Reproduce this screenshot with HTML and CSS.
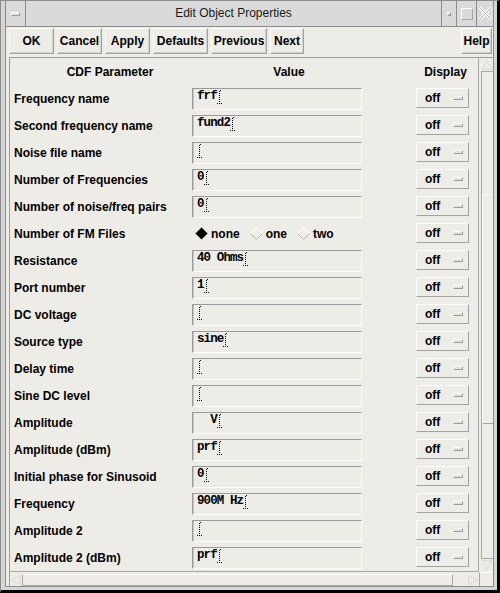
FILE: index.html
```html
<!DOCTYPE html>
<html>
<head>
<meta charset="utf-8">
<title>Edit Object Properties</title>
<link rel="stylesheet" href="styles.css">
</head>
<body>
<div class="wm">
  <div class="frame">
    <div class="titlebar">
      <div class="tb-box tb-menu"><span class="menu-glyph"></span></div>
      <div class="tb-title">Edit Object Properties</div>
      <div class="tb-box tb-min"><span class="min-glyph"></span></div>
      <div class="tb-box tb-max"><span class="max-glyph"></span></div>
      <div class="tb-box tb-close">
        <svg width="13" height="13" viewBox="0 0 13 13"><path d="M0.5 0.5 L12.5 12.5 M12.5 0.5 L0.5 12.5" stroke="#ffffff" stroke-width="3" fill="none"/><path d="M0.5 0.5 L12.5 12.5 M12.5 0.5 L0.5 12.5" stroke="#b4b4b4" stroke-width="1" fill="none"/></svg>
      </div>
    </div>
    <div class="client">
      <div class="toolbar">
        <button class="btn b-ok">OK</button>
        <button class="btn b-cancel">Cancel</button>
        <button class="btn b-apply">Apply</button>
        <button class="btn b-defaults">Defaults</button>
        <button class="btn b-previous">Previous</button>
        <button class="btn b-next">Next</button>
        <button class="btn b-help">Help</button>
      </div>
      <div class="scrollwin">
        <div class="view">
          <div class="form">
            <div class="hdr hdr-param">CDF Parameter</div>
            <div class="hdr hdr-value">Value</div>
            <div class="hdr hdr-display">Display</div>

            <div class="lbl">Frequency name</div>
            <div class="field"><span class="txt">frf</span><span class="caret"></span></div>
            <div class="disp"><span>off</span><span class="ind"></span></div>

            <div class="lbl">Second frequency name</div>
            <div class="field"><span class="txt">fund2</span><span class="caret"></span></div>
            <div class="disp"><span>off</span><span class="ind"></span></div>

            <div class="lbl">Noise file name</div>
            <div class="field"><span class="txt"></span><span class="caret"></span></div>
            <div class="disp"><span>off</span><span class="ind"></span></div>

            <div class="lbl">Number of Frequencies</div>
            <div class="field"><span class="txt">0</span><span class="caret"></span></div>
            <div class="disp"><span>off</span><span class="ind"></span></div>

            <div class="lbl">Number of noise/freq pairs</div>
            <div class="field"><span class="txt">0</span><span class="caret"></span></div>
            <div class="disp"><span>off</span><span class="ind"></span></div>

            <div class="lbl">Number of FM Files</div>
            <div class="radios">
              <span class="radio"><svg width="13" height="13" viewBox="0 0 13 13"><polygon points="6.5,0.5 12.5,6.5 6.5,12.5 0.5,6.5" fill="#000"/><path d="M0.5 6.5 L6.5 0.5 L12.5 6.5" stroke="#6e6e6e" fill="none"/></svg>none</span>
              <span class="radio"><svg width="13" height="13" viewBox="0 0 13 13"><path d="M0.5 6.5 L6.5 0.5 L12.5 6.5" stroke="#ffffff" fill="none"/><path d="M0.5 6.5 L6.5 12.5 L12.5 6.5" stroke="#b4b4b4" fill="none"/></svg>one</span>
              <span class="radio"><svg width="13" height="13" viewBox="0 0 13 13"><path d="M0.5 6.5 L6.5 0.5 L12.5 6.5" stroke="#ffffff" fill="none"/><path d="M0.5 6.5 L6.5 12.5 L12.5 6.5" stroke="#b4b4b4" fill="none"/></svg>two</span>
            </div>
            <div class="disp"><span>off</span><span class="ind"></span></div>

            <div class="lbl">Resistance</div>
            <div class="field"><span class="txt">40 Ohms</span><span class="caret"></span></div>
            <div class="disp"><span>off</span><span class="ind"></span></div>

            <div class="lbl">Port number</div>
            <div class="field"><span class="txt">1</span><span class="caret"></span></div>
            <div class="disp"><span>off</span><span class="ind"></span></div>

            <div class="lbl">DC voltage</div>
            <div class="field"><span class="txt"></span><span class="caret"></span></div>
            <div class="disp"><span>off</span><span class="ind"></span></div>

            <div class="lbl">Source type</div>
            <div class="field"><span class="txt">sine</span><span class="caret"></span></div>
            <div class="disp"><span>off</span><span class="ind"></span></div>

            <div class="lbl">Delay time</div>
            <div class="field"><span class="txt"></span><span class="caret"></span></div>
            <div class="disp"><span>off</span><span class="ind"></span></div>

            <div class="lbl">Sine DC level</div>
            <div class="field"><span class="txt"></span><span class="caret"></span></div>
            <div class="disp"><span>off</span><span class="ind"></span></div>

            <div class="lbl">Amplitude</div>
            <div class="field"><span class="txt">  V</span><span class="caret"></span></div>
            <div class="disp"><span>off</span><span class="ind"></span></div>

            <div class="lbl">Amplitude (dBm)</div>
            <div class="field"><span class="txt">prf</span><span class="caret"></span></div>
            <div class="disp"><span>off</span><span class="ind"></span></div>

            <div class="lbl">Initial phase for Sinusoid</div>
            <div class="field"><span class="txt">0</span><span class="caret"></span></div>
            <div class="disp"><span>off</span><span class="ind"></span></div>

            <div class="lbl">Frequency</div>
            <div class="field"><span class="txt">900M Hz</span><span class="caret"></span></div>
            <div class="disp"><span>off</span><span class="ind"></span></div>

            <div class="lbl">Amplitude 2</div>
            <div class="field"><span class="txt"></span><span class="caret"></span></div>
            <div class="disp"><span>off</span><span class="ind"></span></div>

            <div class="lbl">Amplitude 2 (dBm)</div>
            <div class="field"><span class="txt">prf</span><span class="caret"></span></div>
            <div class="disp"><span>off</span><span class="ind"></span></div>
          </div>
        </div>
        <div class="vscroll">
          <div class="arrow arrow-up"><svg width="10" height="10" viewBox="0 0 10 10"><path d="M5 0.5 L0.5 9.5 M5 0.5 L9.5 9.5 M0.5 9.5 L9.5 9.5" stroke="#c8c8c8" stroke-dasharray="1 1" fill="none"/></svg></div>
          <div class="vtrough">
            <div class="vthumb"></div>
          </div>
          <div class="arrow arrow-down"><svg width="10" height="10" viewBox="0 0 10 10"><path d="M5 9.5 L0.5 0.5 M5 9.5 L9.5 0.5 M0.5 0.5 L9.5 0.5" stroke="#c8c8c8" stroke-dasharray="1 1" fill="none"/></svg></div>
        </div>
        <div class="hscroll">
          <div class="arrow arrow-left"><svg width="10" height="10" viewBox="0 0 10 10"><path d="M0.5 5 L9.5 0.5 M0.5 5 L9.5 9.5 M9.5 0.5 L9.5 9.5" stroke="#c8c8c8" stroke-dasharray="1 1" fill="none"/></svg></div>
          <div class="htrough"><div class="hthumb"></div></div>
          <div class="arrow arrow-right"><svg width="10" height="10" viewBox="0 0 10 10"><path d="M9.5 5 L0.5 0.5 M9.5 5 L0.5 9.5 M0.5 0.5 L0.5 9.5" stroke="#c8c8c8" stroke-dasharray="1 1" fill="none"/></svg></div>
        </div>
        <div class="corner"></div>
      </div>
    </div>
  </div>
</div>
</body>
</html>
```
FILE: styles.css
```css
* { box-sizing: border-box; }
html, body { margin: 0; padding: 0; }
body {
  width: 500px;
  height: 593px;
  overflow: hidden;
  background: #000;
  font-family: "Liberation Sans", Arial, sans-serif;
}

.wm {
  width: 500px;
  height: 593px;
  display: flex;
  background: #d6d6d6;
  border-left: 1px solid #8c8c8c;
  border-top: 1px solid #8c8c8c;
  border-right: 3px solid #000;
  border-bottom: 3px solid #000;
  padding: 0 3px 3px 4px;
}

.frame {
  flex: 1;
  display: flex;
  flex-direction: column;
  border-left: 1px solid #8c8c8c;
  border-right: 1px solid #8c8c8c;
  border-bottom: 1px solid #8c8c8c;
}

/* title bar */
.titlebar {
  height: 26px;
  display: flex;
  background: #dadada;
  border-bottom: 1px solid #8c8c8c;
}
.tb-box {
  display: flex;
  align-items: center;
  justify-content: center;
}
.tb-menu { width: 20px; border-right: 1px solid #8c8c8c; }
.menu-glyph {
  width: 9px;
  height: 4px;
  background: #e4e4e4;
  border-top: 1px solid #fff;
  border-left: 1px solid #fff;
  border-right: 1px solid #9a9a9a;
  border-bottom: 1px solid #9a9a9a;
}
.tb-title {
  flex: 1;
  text-align: center;
  font-size: 12px;
  line-height: 25px;
  color: #1a1a1a;
}
.tb-min { width: 15px; border-left: 1px solid #8c8c8c; }
.min-glyph {
  width: 4px;
  height: 4px;
  border-top: 1px solid #fff;
  border-left: 1px solid #fff;
  border-right: 1px solid #9a9a9a;
  border-bottom: 1px solid #9a9a9a;
}
.tb-max { width: 20px; border-left: 1px solid #8c8c8c; }
.max-glyph {
  width: 12px;
  height: 12px;
  border-top: 1px solid #fff;
  border-left: 1px solid #fff;
  border-right: 1px solid #a6a6a6;
  border-bottom: 1px solid #a6a6a6;
}
.tb-close { width: 17px; border-left: 1px solid #8c8c8c; }

/* client */
.client {
  flex: 1;
  display: flex;
  flex-direction: column;
  background: #edece6;
}

.toolbar {
  display: flex;
  gap: 3px;
  padding: 1px 1px 0 3px;
  height: 27px;
}
.btn {
  height: 26px;
  padding: 0;
  margin: 0;
  font-family: "Liberation Sans", Arial, sans-serif;
  font-weight: bold;
  font-size: 12px;
  color: #000;
  background: #edece6;
  border: 1px solid;
  border-color: #ffffff #a2a2a2 #a2a2a2 #ffffff;
  box-shadow: inset -1px -1px 0 #d2d2cc;
}
.b-ok { width: 45px; }
.b-cancel { width: 45px; }
.b-apply { width: 45px; }
.b-defaults { width: 55px; }
.b-previous { width: 56px; }
.b-next { width: 34px; }
.b-help { width: 31px; margin-left: auto; }

/* scrolled window */
.scrollwin {
  flex: 1;
  margin: 3px 0 0 3px;
  border-top: 1px solid #9c9c9c;
  border-left: 1px solid #9c9c9c;
  display: grid;
  grid-template-columns: 1fr 14px;
  grid-template-rows: 1fr 14px;
  min-height: 0;
}
.view {
  overflow: hidden;
  border-right: 1px solid #a8a8a8;
  border-bottom: 1px solid #a8a8a8;
  min-height: 0;
}
.form {
  display: grid;
  grid-template-columns: 178px 170px 54px 53px;
  grid-auto-rows: 27px;
  padding-left: 4px;
  align-items: center;
}
.hdr {
  font-weight: bold;
  font-size: 12px;
  color: #000;
}
.hdr-param { grid-column: 1; justify-self: center; padding-left: 14px; }
.hdr-value { grid-column: 2 / 4; justify-self: center; padding-right: 30px; }
.hdr-display { grid-column: 4; justify-self: center; padding-left: 6px; }

.lbl {
  grid-column: 1;
  font-weight: bold;
  font-size: 12px;
  color: #000;
  white-space: nowrap;
}
.field {
  grid-column: 2;
  height: 22px;
  border: 1px solid;
  border-color: #9a9a9a #ffffff #ffffff #9a9a9a;
  box-shadow: inset 1px 0 0 #c6c6c0;
  padding: 1px 0 0 4px;
  display: flex;
  align-items: flex-start;
  font-family: "Liberation Mono", "Courier New", monospace;
  font-weight: bold;
  font-size: 12.5px;
  letter-spacing: -0.9px;
  line-height: 13px;
  color: #000;
}
.txt { white-space: pre; }
.caret {
  width: 5px;
  height: 14px;
  margin-left: 0;
  background:
    linear-gradient(#000, #000) 3px 0 / 1px 1px no-repeat,
    linear-gradient(#000, #000) 2px 1px / 1px 1px no-repeat,
    repeating-linear-gradient(#000 0 1px, transparent 1px 2px) 2px 3px / 1px 9px no-repeat,
    repeating-linear-gradient(90deg, #000 0 1px, transparent 1px 2px) 0 13px / 5px 1px no-repeat;
}
.radios {
  grid-column: 2 / 4;
  display: flex;
  align-items: center;
  padding-left: 3px;
  font-weight: bold;
  font-size: 12px;
  color: #000;
}
.radio {
  display: flex;
  align-items: center;
  gap: 3px;
  margin-right: 10px;
}
.radio svg { display: block; }
.disp {
  grid-column: 4;
  height: 20px;
  margin-top: -1px;
  border: 1px solid;
  border-color: #ffffff #a2a2a2 #a2a2a2 #ffffff;
  display: flex;
  align-items: center;
  padding-left: 8px;
  font-weight: bold;
  font-size: 12px;
  color: #000;
}
.ind {
  width: 10px;
  height: 4px;
  margin-left: 13px;
  background: #e2e2dc;
  border-top: 1px solid #fff;
  border-left: 1px solid #fff;
  border-right: 1px solid #9a9a9a;
  border-bottom: 1px solid #9a9a9a;
}

/* scrollbars */
.vscroll {
  display: flex;
  flex-direction: column;
  padding: 1px 0 1px 2px;
  min-height: 0;
}
.arrow {
  display: flex;
  align-items: center;
  justify-content: center;
}
.arrow-up, .arrow-down { height: 12px; }
.vtrough {
  flex: 1;
  border-left: 1px solid #a8a8a8;
  border-top: 1px solid #a8a8a8;
  border-bottom: 1px solid #a8a8a8;
  display: flex;
  flex-direction: column;
  padding-top: 122px;
}
.vthumb {
  height: 230px;
  border-top: 1px solid #fff;
  border-left: 1px solid #fff;
  border-bottom: 1px solid #a8a8a8;
}
.hscroll {
  display: flex;
  padding: 2px 0 0 0;
}
.arrow-left, .arrow-right { width: 12px; }
.htrough {
  flex: 1;
  display: flex;
  padding-right: 14px;
}
.hthumb {
  flex: 1;
  border-top: 1px solid #fff;
  border-left: 1px solid #a8a8a8;
  border-right: 1px solid #a8a8a8;
  border-bottom: 1px solid #a8a8a8;
}
.corner {
  border-left: 1px solid #a8a8a8;
  border-top: 1px solid #fff;
}
```
